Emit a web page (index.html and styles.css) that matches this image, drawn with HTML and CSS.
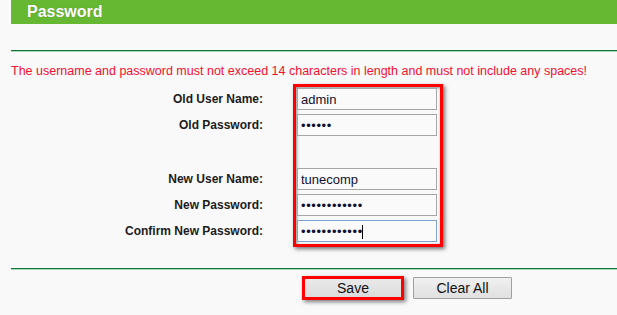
FILE: index.html
```html
<!DOCTYPE html>
<html>
<head>
<meta charset="utf-8">
<link rel="stylesheet" href="styles.css">
</head>
<body>
<div class="header">Password</div>
<div class="rule rule-top"></div>
<p class="note">The username and password must not exceed 14 characters in length and must not include any spaces!</p>
<div class="form">
  <div class="labels">
    <div class="label">Old User Name:</div>
    <div class="label">Old Password:</div>
    <div class="spacer"></div>
    <div class="label">New User Name:</div>
    <div class="label">New Password:</div>
    <div class="label">Confirm New Password:</div>
  </div>
  <div class="fields">
    <input class="field" type="text" value="admin">
    <input class="field pw" type="password" value="abcdef">
    <div class="spacer"></div>
    <input class="field" type="text" value="tunecomp">
    <input class="field pw" type="password" value="abcdefghijkl">
    <div class="field-wrap">
      <input class="field pw focused" type="password" value="abcdefghijkl">
      <span class="caret"></span>
    </div>
  </div>
</div>
<div class="rule rule-bottom"></div>
<div class="buttons">
  <div class="save-wrap"><button class="btn btn-save">Save</button></div>
  <button class="btn btn-clear">Clear All</button>
</div>
</body>
</html>
```
FILE: styles.css
```css
html, body {
  margin: 0;
  padding: 0;
}
body {
  background: #f9f9f9;
  font-family: "Liberation Sans", Arial, sans-serif;
  width: 617px;
  height: 315px;
  overflow: hidden;
}
.header {
  margin-left: 11px;
  height: 24px;
  background: #66b832;
  color: #fff;
  font-weight: bold;
  font-size: 16px;
  line-height: 24px;
  padding-left: 16px;
  text-shadow: 0 0 1px rgba(60, 90, 60, 0.5);
}
.rule {
  margin-left: 11px;
  border-top: 1px solid #13733a;
  border-bottom: 1px solid #a8d8b8;
  height: 0;
}
.rule-top {
  margin-top: 26px;
}
.note {
  margin: 12px 0 0 11px;
  color: #f5102e;
  font-size: 12.5px;
  line-height: 14px;
}
.form {
  display: flex;
  margin-top: 6px;
}
.labels {
  width: 263px;
  padding-top: 4px;
  display: flex;
  flex-direction: column;
  gap: 4px;
}
.label {
  height: 22px;
  line-height: 22px;
  text-align: right;
  font-weight: bold;
  font-size: 12px;
  color: #1c1c1c;
}
.spacer {
  height: 24px;
}
.fields {
  margin-left: 30px;
  width: 142px;
  border: 3px solid #ff0000;
  padding: 1px 1px 2px 1px;
  display: flex;
  flex-direction: column;
  gap: 4px;
  box-shadow: 2px 2px 4px rgba(0, 0, 0, 0.55), inset 1px 1px 3px rgba(0, 0, 0, 0.45);
}
.field {
  box-sizing: border-box;
  width: 140px;
  height: 22px;
  margin: 0;
  border: 1px solid #a6a6a6;
  background: #fafafa;
  font-family: "Liberation Sans", Arial, sans-serif;
  font-size: 13px;
  color: #101030;
  padding: 0 3px;
  outline: none;
}
.field.pw {
  letter-spacing: 0.6px;
}
.field.focused {
  border-color: #7ea3d0;
}
.field-wrap {
  position: relative;
  height: 22px;
}
.caret {
  position: absolute;
  left: 65px;
  top: 5px;
  width: 1px;
  height: 14px;
  background: #000;
}
.rule-bottom {
  margin-top: 21px;
}
.buttons {
  display: flex;
  align-items: center;
  margin: 6px 0 0 302px;
}
.save-wrap {
  border: 3px solid #ff0000;
  box-shadow: 2px 2px 4px rgba(0, 0, 0, 0.5), inset 1px 1px 3px rgba(0, 0, 0, 0.5);
  width: 96px;
  height: 18px;
}
.btn {
  font-family: "Liberation Sans", Arial, sans-serif;
  font-size: 14px;
  color: #111;
  margin: 0;
  padding: 0;
  background: linear-gradient(#f0f0f0, #e0e0e0);
  border: 1px solid #a0a0a0;
  box-sizing: border-box;
}
.btn-save {
  width: 96px;
  height: 18px;
  line-height: 16px;
  border: none;
  background: linear-gradient(#e9e9e9, #dcdcdc);
}
.btn-clear {
  margin-left: 9px;
  width: 99px;
  height: 22px;
  border-radius: 1px;
}
```
